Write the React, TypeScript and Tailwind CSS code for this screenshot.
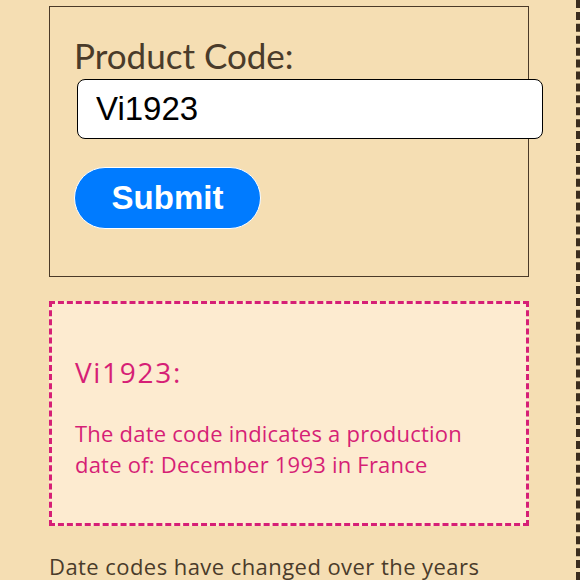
export default function App() {
  return (
    <div className="h-[580px] w-[580px] overflow-hidden border-r-4 border-dashed border-[#3b2c1d] bg-[#f5deb3] pl-[49px] pt-[6px] font-['Lato',sans-serif] text-[#4a3b2a]">
      {/* form box */}
      <div className="w-[480px] border border-[#4a3a28] pb-[47px] pl-[24px] pt-[28px]">
        <label className="mb-[4px] block text-[35px] leading-[40px]">Product Code:</label>
        <input
          readOnly
          value="Vi1923"
          className="ml-[3px] block h-[60px] w-[466px] rounded-lg border border-black bg-white px-[18px] font-['Liberation_Sans',Arial,sans-serif] text-[33px] text-black outline-none"
        />
        <button className="mt-[28px] flex h-[62px] w-[187px] items-center justify-center rounded-full border border-white bg-[#007bff] font-['Liberation_Sans',Arial,sans-serif] text-[33px] font-bold text-white">
          Submit
        </button>
      </div>

      {/* result */}
      <div className="mt-[24px] w-[480px] border-[3px] border-dashed border-[#d61f76] bg-[#fdebd0] pb-[43px] pl-[23px] pr-4 pt-[51px] font-['Open_Sans',sans-serif] text-[#d61f76]">
        <h3 className="text-[28px] leading-[34px] tracking-[0.06em]">Vi1923:</h3>
        <p className="mt-[29px] max-w-[405px] text-[22px] leading-[31px] tracking-[0.01em]">
          The date code indicates a production date of: December 1993 in France
        </p>
      </div>

      <p className="mt-[25px] font-['Open_Sans',sans-serif] text-[22px] leading-[31px] tracking-[0.02em]">
        Date codes have changed over the years
      </p>
    </div>
  )
}
